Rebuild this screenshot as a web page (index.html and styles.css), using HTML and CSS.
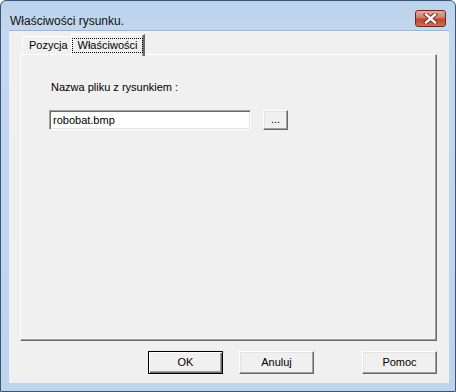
FILE: index.html
```html
<!DOCTYPE html>
<html lang="pl">
<head>
<meta charset="utf-8">
<title>Właściwości rysunku.</title>
<link rel="stylesheet" href="styles.css">
</head>
<body>
<div class="window">
  <div class="titlebar">
    <span class="title">Właściwości rysunku.</span>
    <div class="close">
      <svg width="15" height="11" viewBox="0 0 15 11">
        <path d="M3 1.5 L12 9.5 M12 1.5 L3 9.5" stroke="#6a2a20" stroke-width="4.2" stroke-linecap="square" fill="none"/>
        <path d="M3 1.5 L12 9.5 M12 1.5 L3 9.5" stroke="#ffffff" stroke-width="2.4" stroke-linecap="square" fill="none"/>
      </svg>
    </div>
  </div>
  <div class="client">
    <div class="tabs">
      <div class="tab">Pozycja</div>
      <div class="tab active"><span class="focus">Właściwości</span></div>
    </div>
    <div class="panel">
      <div class="label">Nazwa pliku z rysunkiem :</div>
      <div class="filerow">
        <div class="input">robobat.bmp</div>
        <div class="btn browse">...</div>
      </div>
    </div>
    <div class="buttons">
      <div class="btn default">OK</div>
      <div class="btn">Anuluj</div>
      <div class="btn help">Pomoc</div>
    </div>
  </div>
</div>
</body>
</html>
```

FILE: styles.css
```css
* { box-sizing: border-box; }
html, body { margin: 0; padding: 0; }
body {
  width: 456px;
  height: 392px;
  overflow: hidden;
  font-family: "Liberation Sans", Arial, sans-serif;
  font-size: 11px;
  color: #000;
}
.window {
  width: 456px;
  height: 392px;
  padding: 0 6px 8px 8px;
  background: linear-gradient(to bottom, #bcd2ec 0px, #c3d8ef 30px, #bed4ed 100%);
  border: 1px solid #3a5576;
  border-radius: 6px 6px 0 0;
  display: flex;
  flex-direction: column;
}
.titlebar {
  height: 29px;
  margin: 0 -6px 0 -8px;
  padding: 0 9px 0 9px;
  display: flex;
  align-items: flex-start;
  justify-content: space-between;
}
.title {
  margin-top: 12px;
  font-size: 12px;
  line-height: 16px;
  color: #111;
}
.close {
  margin-top: 9px;
  width: 31px;
  height: 17px;
  border: 1px solid #6e2a20;
  border-radius: 3px;
  background: linear-gradient(to bottom, #e8a99b 0%, #d47a65 45%, #c0432c 55%, #d0704f 100%);
  display: flex;
  align-items: center;
  justify-content: center;
}
.close svg { display: block; }
.client {
  flex: 1;
  background: #f0f0f0;
  padding: 3px 12px 0 11px;
  border-top: 1px solid #9fb6d2;
  display: flex;
  flex-direction: column;
}
.tabs {
  height: 20px;
  display: flex;
  align-items: flex-end;
  padding-left: 2px;
  position: relative;
  z-index: 1;
}
.tab {
  height: 18px;
  width: 49px;
  padding: 1px 0 0 6px;
  border-top: 1px solid #fff;
  border-left: 1px solid #fff;
  line-height: 15px;
  background: #f0f0f0;
}
.tab.active {
  height: 22px;
  width: 74px;
  margin-bottom: -2px;
  padding: 3px 0 0 0;
  border-right: 2px solid #696969;
  box-shadow: inset -1px 0 0 #a0a0a0;
}
.focus {
  display: block;
  height: 15px;
  width: 71px;
  border: 1px dotted #000;
  text-align: center;
  line-height: 13px;
}
.panel {
  height: 287px;
  border-top: 1px solid #fff;
  border-left: 1px solid #fff;
  border-right: 1px solid #696969;
  border-bottom: 1px solid #696969;
  box-shadow: inset -1px -1px 0 #a0a0a0;
  padding: 26px 0 0 28px;
}
.label {
  margin-left: 2px;
  line-height: 13px;
}
.filerow {
  margin-top: 16px;
  display: flex;
  gap: 12px;
}
.input {
  width: 202px;
  height: 20px;
  background: #fff;
  border-top: 1px solid #a0a0a0;
  border-left: 1px solid #a0a0a0;
  border-right: 1px solid #fff;
  border-bottom: 1px solid #fff;
  box-shadow: inset 1px 1px 0 #696969, inset -1px -1px 0 #e3e3e3;
  padding: 2px 3px;
  line-height: 15px;
  font-size: 11px;
}
.btn {
  width: 75px;
  height: 23px;
  background: #f0f0f0;
  border-top: 1px solid #fff;
  border-left: 1px solid #fff;
  border-right: 1px solid #696969;
  border-bottom: 1px solid #696969;
  box-shadow: inset -1px -1px 0 #a0a0a0, inset 1px 1px 0 #e3e3e3;
  display: flex;
  align-items: center;
  justify-content: center;
  line-height: 13px;
}
.btn.browse {
  width: 25px;
  height: 20px;
  padding-bottom: 2px;
}
.btn.default {
  border: 1px solid #000;
  box-shadow: inset 1px 1px 0 #fff, inset -1px -1px 0 #696969, inset -2px -2px 0 #a0a0a0;
}
.buttons {
  margin-top: 10px;
  display: flex;
  justify-content: flex-end;
  gap: 16px;
}
.btn.help { margin-left: 32px; }
```
